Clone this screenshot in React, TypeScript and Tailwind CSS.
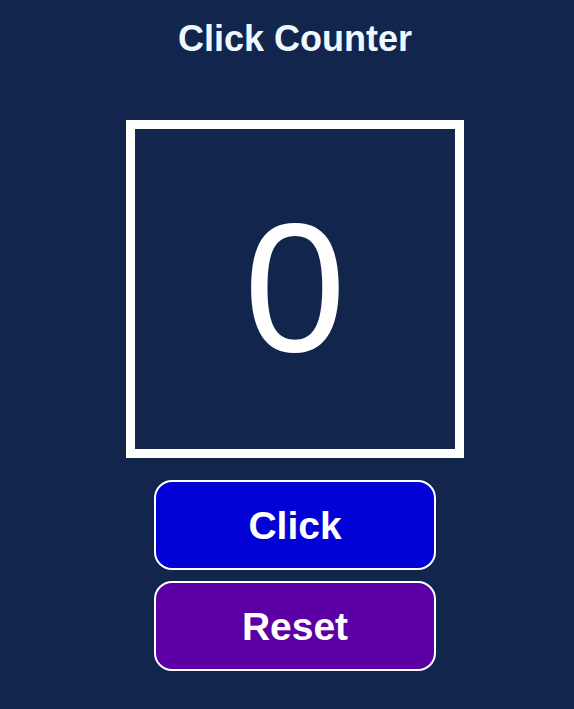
import { useState } from "react";

export default function App() {
  const [count, setCount] = useState(0);
  return (
    <main className="flex min-h-screen flex-col items-center bg-[#12264d] pl-4 font-['Liberation_Sans',Arial,sans-serif] text-white">
      <h1 className="pt-4 text-4xl leading-[46px] font-bold text-[#f0f8ff]">Click Counter</h1>
      <output
        aria-live="polite"
        className="mt-[58px] flex size-[338px] items-center justify-center border-9 border-white pb-1 text-[183px] leading-none"
      >
        {count}
      </output>
      <div className="mt-[22px] flex w-[282px] flex-col gap-[11px] pb-8">
        <button
          type="button"
          onClick={() => setCount(count + 1)}
          className="h-[90px] rounded-[18px] border-2 border-white bg-[#0202d6] pt-0.5 text-[39px] font-bold"
        >
          Click
        </button>
        <button
          type="button"
          onClick={() => setCount(0)}
          className="h-[90px] rounded-[18px] border-2 border-white bg-[#5c00a6] pt-0.5 text-[39px] font-bold"
        >
          Reset
        </button>
      </div>
    </main>
  );
}
